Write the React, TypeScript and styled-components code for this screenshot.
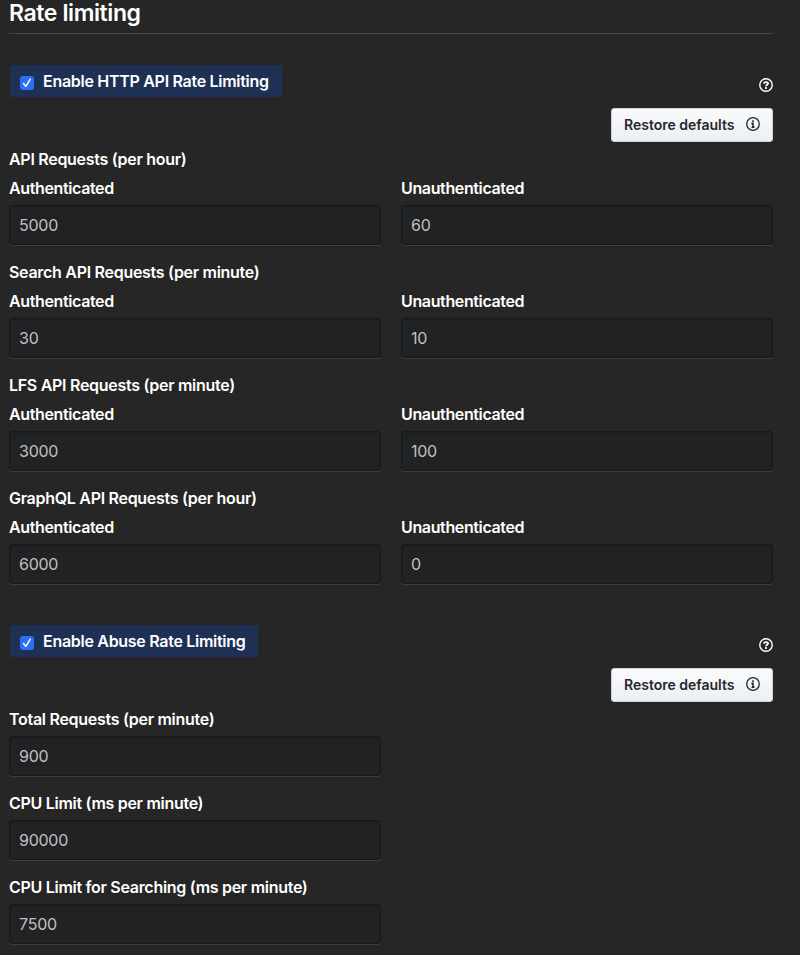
import React from "react";
import styled, { createGlobalStyle } from "styled-components";

const Global = createGlobalStyle`
  *{box-sizing:border-box}
  body{margin:0;background:#262626;overflow:hidden;font-family:Inter,"Liberation Sans",sans-serif;color:#fff}
`;
const Page = styled.main`width:773px;height:955px;padding-left:9px;overflow:hidden;background:#262626;`;
const Title = styled.h1`margin:0;height:34px;border-bottom:1px solid #444;font-size:23px;line-height:26px;font-weight:600;letter-spacing:-.4px;`;
const Section = styled.section`padding-top:31px;`;
const Head = styled.div`display:flex;justify-content:space-between;height:43px;`;
const Toggle = styled.label<{ $w: number }>`display:flex;align-items:center;width:${p => p.$w}px;height:32px;margin-left:1px;padding-left:10px;gap:9px;border-radius:2px;background:#1e3154;font-size:16px;font-weight:600;letter-spacing:-.29px;white-space:nowrap;`;
const Check = styled.span`display:flex;width:14px;height:14px;margin-top:3px;border-radius:3px;background:#2e6ef7;`;
const Help = styled.span`display:flex;width:14px;height:14px;margin-top:13px;`;
const Actions = styled.div`display:flex;justify-content:flex-end;height:34px;`;
const Restore = styled.button`display:flex;align-items:center;justify-content:space-between;width:162px;height:34px;padding:0 12px 2px;border:1px solid #cfd2d6;border-radius:3px;background:linear-gradient(#fafbfc,#eaeef3);color:#24292e;font:600 14px Inter,sans-serif;white-space:nowrap;`;
const Group = styled.div`height:113px;padding-top:3px;`;
const Label = styled.div`height:29px;line-height:29px;font-size:16px;font-weight:600;letter-spacing:-.29px;white-space:nowrap;`;
const SubLabel = styled(Label)`letter-spacing:-.37px;`;
const Columns = styled.div`display:grid;grid-template-columns:372px 372px;gap:20px;`;
const Input = styled.input`display:block;width:372px;height:40px;margin:2px 0 0;padding:0 9px;border:1px solid #17181a;border-radius:3px;background:#202224;box-shadow:0 1px 0 #3c3c3c,inset 0 1px 2px rgba(0,0,0,.15);color:#c0c0c0;font:400 16px Inter,sans-serif;letter-spacing:-.25px;outline:none;`;
const Field = styled.div`height:84px;padding-top:3px;`;

const HelpIcon = () => <Help><svg width="14" height="14" viewBox="0 0 14 14" fill="none" stroke="#fff" strokeWidth="1.4"><circle cx="7" cy="7" r="6.2" /><path strokeWidth="1.8" d="M4.9 5.6c.1-2.1 4.2-2.1 4.2 0C9.1 6.8 7 6.7 7 8.3M7 9.1v1.8" /></svg></Help>;
const RestoreButton = () => <Actions><Restore>Restore defaults<svg width="14" height="14" viewBox="0 0 14 14" fill="none" stroke="#24292e" strokeWidth="1.3"><circle cx="7" cy="7" r="6.3" /><path strokeWidth="1.6" d="M5.4 6.4H7v3.8M5.5 10.2h3.1M7 3.2v1.7" /></svg></Restore></Actions>;
const Header = ({ text, w }: { text: string; w: number }) => <><Head><Toggle $w={w}><Check><svg width="14" height="14" fill="none" stroke="#fff" strokeWidth="1.5" strokeLinecap="round" strokeLinejoin="round"><path d="m3.6 7.5 2.3 2.9 4.4-7.2" /></svg></Check>{text}</Toggle><HelpIcon /></Head><RestoreButton /></>;

const groups = [["API Requests (per hour)", "5000", "60"], ["Search API Requests (per minute)", "30", "10"], ["LFS API Requests (per minute)", "3000", "100"], ["GraphQL API Requests (per hour)", "6000", "0"]];
const fields = [["Total Requests (per minute)", "900"], ["CPU Limit (ms per minute)", "90000"], ["CPU Limit for Searching (ms per minute)", "7500"]];

export default function App() {
  return <><Global /><Page><Title>Rate limiting</Title>
    <Section><Header text="Enable HTTP API Rate Limiting" w={272} />
      {groups.map(([t, a, b]) => <Group key={t}><Label>{t}</Label><Columns><div><SubLabel>Authenticated</SubLabel><Input defaultValue={a} /></div><div><SubLabel>Unauthenticated</SubLabel><Input defaultValue={b} /></div></Columns></Group>)}
    </Section>
    <Section><Header text="Enable Abuse Rate Limiting" w={248} />
      {fields.map(([t, v]) => <Field key={t}><Label>{t}</Label><Input defaultValue={v} /></Field>)}
    </Section></Page></>;
}
